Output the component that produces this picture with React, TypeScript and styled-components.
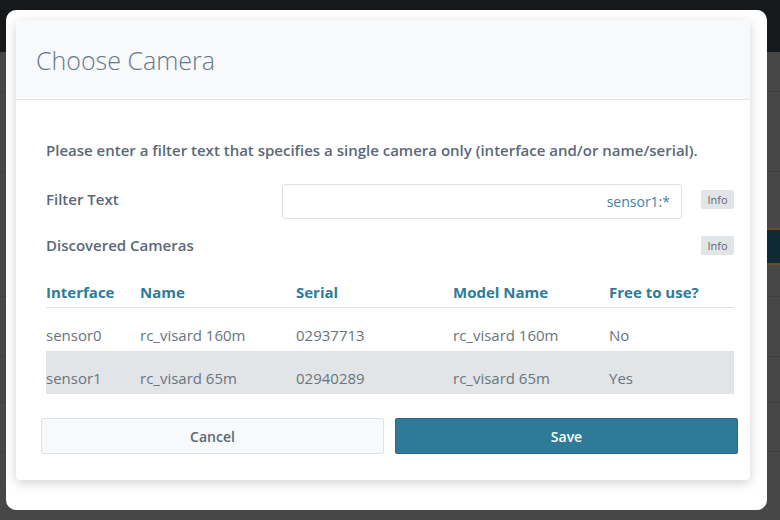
import React from "react";
import styled, { createGlobalStyle } from "styled-components";

const Global = createGlobalStyle`
  html, body { margin: 0; padding: 0; }
  body {
    width: 780px; height: 520px; overflow: hidden;
    font-family: "Open Sans", "Noto Sans", sans-serif;
    background: #474747;
  }
`;

const Page = styled.div`
  width: 780px;
  height: 520px;
  display: flex;
  flex-direction: column;
  background: #474747;
`;

const TopBar = styled.div`
  height: 52px;
  background: #16191c;
  flex: none;
`;

const BgRow = styled.div<{ $h: number }>`
  height: ${(p) => p.$h}px;
  flex: none;
  border-bottom: 1px solid #3e3e3e;
  display: flex;
  justify-content: flex-end;
  align-items: flex-start;
  box-sizing: border-box;
`;

const BgTeal = styled.div`
  margin-top: 56px;
  width: 30px;
  height: 37px;
  background: #0f2a33;
  border-top: 2px solid #6b4e1c;
  border-bottom: 2px solid #6b4e1c;
  box-sizing: border-box;
`;

const Overlay = styled.div`
  position: fixed;
  inset: 0;
  padding: 10px 0 0 6px;
`;

const Frame = styled.div`
  width: 761px;
  height: 500px;
  background: #ffffff;
  border-radius: 10px;
  box-sizing: border-box;
  padding: 10px 17px 30px 10px;
`;

const Modal = styled.div`
  width: 734px;
  height: 460px;
  background: #fff;
  border-radius: 4px;
  box-shadow: 0 3px 12px rgba(0, 0, 0, 0.18);
  display: flex;
  flex-direction: column;
  overflow: hidden;
`;

const Header = styled.div`
  height: 79px;
  background: #f8f9fa;
  border-bottom: 1px solid #e1e4e8;
  display: flex;
  align-items: center;
  padding-left: 20px;
  flex: none;
`;

const Title = styled.h2`
  margin: 0;
  font-family: "Open Sans", sans-serif;
  font-weight: 300;
  font-size: 25px;
  color: #66788a;
`;

const Body = styled.div`
  padding: 39px 16px 0 30px;
  display: flex;
  flex-direction: column;
`;

const Intro = styled.p`
  margin: 0 0 23px;
  font-size: 15px;
  font-weight: 600;
  color: #5b6878;
  line-height: 22px;
`;

const Label = styled.div`
  font-size: 15px;
  font-weight: 600;
  color: #5b6878;
`;

const InfoBadge = styled.span`
  justify-self: end;
  display: inline-flex;
  align-items: center;
  justify-content: center;
  width: 33px;
  height: 19px;
  background: #e2e5e8;
  border-radius: 2px;
  font-size: 11px;
  color: #5b6670;
`;

const FieldRow = styled.div`
  display: grid;
  grid-template-columns: 236px 400px 1fr;
  align-items: center;
  height: 35px;

  & > ${Label}, & > ${InfoBadge} {
    margin-bottom: 5px;
  }
`;

const Input = styled.input`
  height: 35px;
  box-sizing: border-box;
  border: 1px solid #dde1e5;
  border-radius: 3px;
  text-align: right;
  padding: 0 11px;
  font-family: "Open Sans", sans-serif;
  font-size: 14px;
  color: #3b84a6;
  outline: none;
  background: #fff;
`;

const LabelRow = styled.div`
  display: grid;
  grid-template-columns: 1fr auto;
  align-items: center;
  height: 24px;
  margin-top: 14px;
`;

const Table = styled.table`
  margin-top: 24px;
  width: 688px;
  border-collapse: collapse;
  font-size: 15px;
`;

const Th = styled.th<{ $w: number }>`
  width: ${(p) => p.$w}px;
  text-align: left;
  font-weight: 700;
  color: #2e7b9b;
  height: 26px;
  padding: 0;
  vertical-align: top;
  line-height: 22px;
  border-bottom: 1px solid #dfe2e6;
`;

const Tr = styled.tr<{ $active?: boolean }>`
  background: ${(p) => (p.$active ? "#e2e5e8" : "transparent")};
`;

const Td = styled.td`
  padding: 16px 0 0;
  height: 27px;
  box-sizing: content-box;
  line-height: 22px;
  vertical-align: top;
  color: #6a747e;
  font-weight: 400;
  border-bottom: 1px solid #dfe2e6;
  tr:last-child > & {
    border-bottom: none;
    padding-top: 15px;
    height: 27px;
  }
`;

const Footer = styled.div`
  display: grid;
  grid-template-columns: 1fr 1fr;
  gap: 11px;
  padding: 24px 12px 0 25px;
`;

const Button = styled.button<{ $primary?: boolean }>`
  height: 36px;
  border-radius: 2px;
  font-family: "Open Sans", sans-serif;
  font-size: 14px;
  font-weight: 600;
  cursor: pointer;
  border: 1px solid ${(p) => (p.$primary ? "#25698a" : "#dfe3e7")};
  background: ${(p) => (p.$primary ? "#2f7a98" : "#f8f9fa")};
  color: ${(p) => (p.$primary ? "#ffffff" : "#5b6878")};
`;

const cols = [
  { key: "iface", label: "Interface", w: 94 },
  { key: "name", label: "Name", w: 156 },
  { key: "serial", label: "Serial", w: 157 },
  { key: "model", label: "Model Name", w: 156 },
  { key: "free", label: "Free to use?", w: 125 },
];

const rows = [
  { iface: "sensor0", name: "rc_visard 160m", serial: "02937713", model: "rc_visard 160m", free: "No" },
  { iface: "sensor1", name: "rc_visard 65m", serial: "02940289", model: "rc_visard 65m", free: "Yes", active: true },
];

export default function App() {
  return (
    <>
      <Global />
      <Page>
        <TopBar />
        <BgRow $h={40} />
        <BgRow $h={80} />
        <BgRow $h={125}>
          <BgTeal />
        </BgRow>
        <BgRow $h={60} />
        <BgRow $h={46} />
        <BgRow $h={49} />
      </Page>
      <Overlay>
        <Frame>
          <Modal>
            <Header>
              <Title>Choose Camera</Title>
            </Header>
            <Body>
              <Intro>Please enter a filter text that specifies a single camera only (interface and/or name/serial).</Intro>
              <FieldRow>
                <Label>Filter Text</Label>
                <Input defaultValue="sensor1:*" readOnly />
                <InfoBadge>Info</InfoBadge>
              </FieldRow>
              <LabelRow>
                <Label>Discovered Cameras</Label>
                <InfoBadge>Info</InfoBadge>
              </LabelRow>
              <Table>
                <thead>
                  <tr>
                    {cols.map((c) => (
                      <Th key={c.key} $w={c.w}>{c.label}</Th>
                    ))}
                  </tr>
                </thead>
                <tbody>
                  {rows.map((r) => (
                    <Tr key={r.iface} $active={r.active}>
                      {cols.map((c) => (
                        <Td key={c.key}>{(r as any)[c.key]}</Td>
                      ))}
                    </Tr>
                  ))}
                </tbody>
              </Table>
            </Body>
            <Footer>
              <Button>Cancel</Button>
              <Button $primary>Save</Button>
            </Footer>
          </Modal>
        </Frame>
      </Overlay>
    </>
  );
}
